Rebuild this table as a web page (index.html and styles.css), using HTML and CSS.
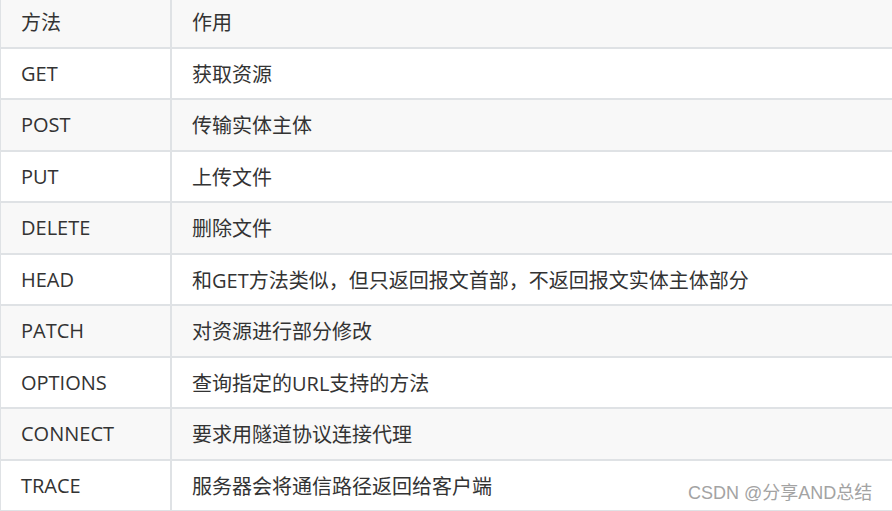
FILE: index.html
```html
<!DOCTYPE html>
<html lang="zh-CN">
<head>
<meta charset="utf-8">
<title>HTTP 方法</title>
<link rel="stylesheet" href="styles.css">
</head>
<body>
<div class="page">
  <table class="methods">
    <thead>
      <tr><th class="c1">方法</th><th class="c2">作用</th></tr>
    </thead>
    <tbody>
      <tr><td class="c1">GET</td><td class="c2">获取资源</td></tr>
      <tr><td class="c1">POST</td><td class="c2">传输实体主体</td></tr>
      <tr><td class="c1">PUT</td><td class="c2">上传文件</td></tr>
      <tr><td class="c1">DELETE</td><td class="c2">删除文件</td></tr>
      <tr><td class="c1">HEAD</td><td class="c2">和GET方法类似，但只返回报文首部，不返回报文实体主体部分</td></tr>
      <tr><td class="c1">PATCH</td><td class="c2">对资源进行部分修改</td></tr>
      <tr><td class="c1">OPTIONS</td><td class="c2">查询指定的URL支持的方法</td></tr>
      <tr><td class="c1">CONNECT</td><td class="c2">要求用隧道协议连接代理</td></tr>
      <tr><td class="c1">TRACE</td><td class="c2">服务器会将通信路径返回给客户端</td></tr>
    </tbody>
  </table>
  <div class="watermark">CSDN @分享AND总结</div>
</div>
</body>
</html>
```
FILE: styles.css
```css
html, body {
  margin: 0;
  padding: 0;
  background: #ffffff;
  overflow: hidden;
}
.page {
  position: relative;
  width: 892px;
  height: 511px;
  overflow: hidden;
}
.methods {
  border-collapse: collapse;
  width: 1000px;
  margin-top: -5px;
  margin-left: -1px;
  font-family: "Open Sans", "Noto Sans CJK SC", sans-serif;
  font-size: 20px;
  color: #333333;
  table-layout: fixed;
}
.methods th,
.methods td {
  border: 2px solid #dfe2e5;
  height: 51.5px;
  padding: 0 0 0 20px;
  text-align: left;
  font-weight: normal;
  vertical-align: middle;
  box-sizing: border-box;
  white-space: nowrap;
}
.methods .c1 { width: 171px; }
.methods .c2 { width: 829px; }
.methods thead tr,
.methods tbody tr:nth-child(even) {
  background: #f8f8f8;
}
.methods tbody tr:nth-child(odd) {
  background: #ffffff;
}
.watermark {
  position: absolute;
  left: 688px;
  top: 478px;
  font-family: "Liberation Sans", "Noto Sans CJK SC", sans-serif;
  font-size: 18px;
  color: #a3a3a3;
  white-space: nowrap;
}
```
